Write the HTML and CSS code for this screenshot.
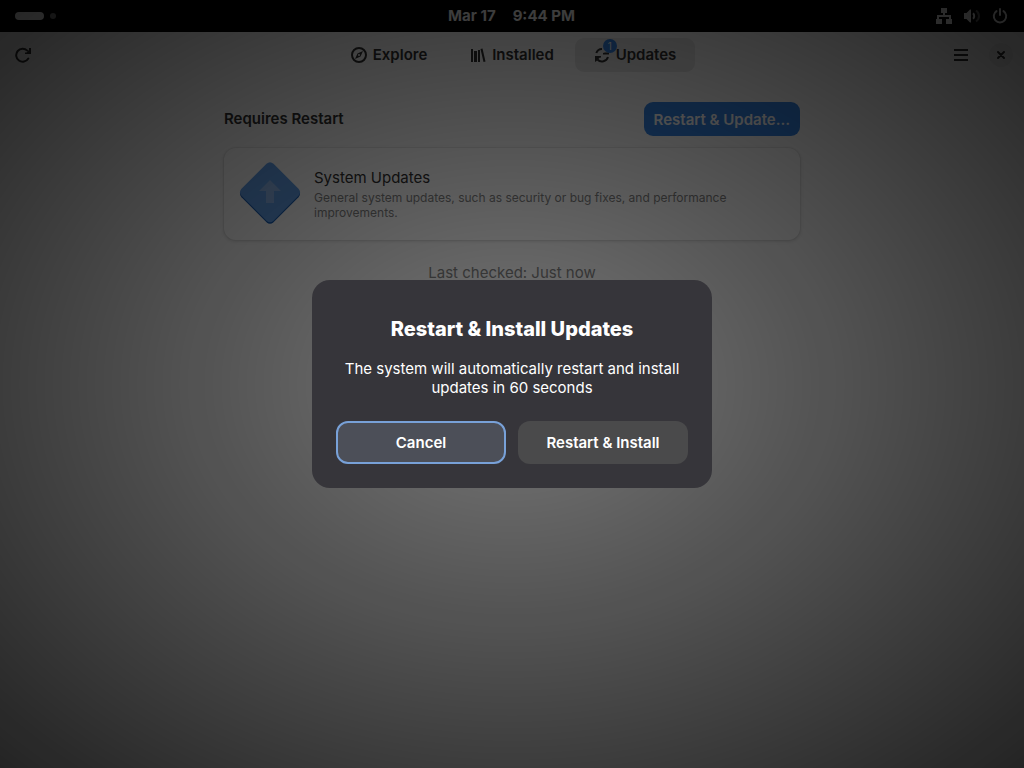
FILE: index.html
```html
<!DOCTYPE html>
<html lang="en">
<head>
<meta charset="utf-8">
<title>Software</title>
<meta name="viewport" content="width=device-width, initial-scale=1">
<link rel="stylesheet" href="styles.css">
</head>
<body>
<div class="desktop">
  <header class="panel">
    <button class="workspaces" aria-label="Activities"><span class="pill"></span><span class="dot"></span></button>
    <button class="clock"><span>Mar 17</span><span>9:44 PM</span></button>
    <button class="status" aria-label="System">
      <svg width="16" height="16" viewBox="0 0 16 16"><path fill="currentColor" d="M5 0h6v5H9v2h6v4h1v5h-6v-5h3V9H3v2h3v5H0v-5h1V7h6V5H5z"/></svg>
      <svg width="16" height="16" viewBox="0 0 16 16"><path fill="currentColor" d="M0 5h2.500L6 1.500h1v13H6L2.500 11H0z"/><path d="M9 5.200c1.600 1.400 1.600 4.200 0 5.600" fill="none" stroke="currentColor" stroke-width="2"/><path d="M12 2.500c4 3 4 8 0 11" fill="none" stroke="currentColor" stroke-width="2" opacity=".4"/></svg>
      <svg width="16" height="16" viewBox="0 0 16 16"><path d="M4.500 3.100a6.200 6.200 0 1 0 7 0M8 1v6" fill="none" stroke="currentColor" stroke-width="2" stroke-linecap="round"/></svg>
    </button>
  </header>
  <div class="window">
    <div class="headerbar">
      <div class="start">
        <button class="icon-button" aria-label="Check for updates"><svg width="16" height="16" viewBox="0 0 16 16"><path d="M13.300 11.500A6.500 6.500 0 1 1 12.300 3.600" fill="none" stroke="currentColor" stroke-width="2" stroke-linecap="round"/><path fill="currentColor" d="M14 1h2v6h-6V5.500h1.500L14 3z"/></svg></button>
      </div>
      <nav class="tabs">
        <button class="tab"><svg width="16" height="16" viewBox="0 0 16 16"><circle cx="8" cy="8" r="7" fill="none" stroke="currentColor" stroke-width="2"/><path fill="currentColor" fill-rule="evenodd" d="M12 4 9.500 9.500 4 12l2.500-5.500zM8 7a1 1 0 1 0 0 2 1 1 0 0 0 0-2z"/></svg><span>Explore</span></button>
        <button class="tab"><svg width="16" height="16" viewBox="0 0 16 16"><path fill="currentColor" d="M1 2h2v13H1zM4 4h3v11H4zM8 3h2v12H8zM10.500 2l2-.400L15.500 14.500l-2 .500z"/></svg><span>Installed</span></button>
        <button class="tab current" aria-current="page"><span class="tab-icon"><svg width="16" height="16" viewBox="0 0 16 16"><path d="M2.300 6A6 6 0 0 1 8 2M14 10A6.300 6.300 0 0 1 3.400 12.500" fill="none" stroke="currentColor" stroke-width="2"/><path fill="currentColor" d="M1 15V9h6v1.500l-1.500.300L2.500 14zM9 7.500V6l2-.500h4v2z"/></svg><span class="badge">1</span></span><span>Updates</span></button>
      </nav>
      <div class="end">
        <button class="icon-button" aria-label="Main menu"><svg width="16" height="16" viewBox="0 0 16 16"><path fill="currentColor" d="M1 2h14v2H1zM1 7h14v2H1zM1 12h14v2H1z"/></svg></button>
        <button class="close" aria-label="Close"><svg width="16" height="16" viewBox="0 0 16 16"><path d="M5 5l6 6M11 5l-6 6" stroke="currentColor" stroke-width="2" stroke-linecap="round"/></svg></button>
      </div>
    </div>
    <main class="content">
      <div class="section-head">
        <h2>Requires Restart</h2>
        <button class="suggested">Restart &amp; Update…</button>
      </div>
      <article class="card">
        <svg class="app-icon" width="64" height="64" viewBox="0 0 64 64"><path fill="#1a5fb4" d="M28.500 3.200q3.500-3 7 0l25 25q3 3.500 0 7l-25 25q-3.500 3-7 0l-25-25q-3-3.500 0-7z"/><path fill="#62a0ea" d="M28.500 1.700q3.500-3 7 0l25 25q3 3.500 0 7l-25 25q-3.500 3-7 0l-25-25q-3-3.500 0-7z"/><path fill="#8fb8ee" d="M32 18l11 11h-7v12h-8V29h-7z"/></svg>
        <div>
          <h3>System Updates</h3>
          <p>General system updates, such as security or bug fixes, and performance improvements.</p>
        </div>
      </article>
      <p class="checked">Last checked: Just now</p>
    </main>
  </div>
</div>
<div class="shade">
  <div class="dialog" role="alertdialog" aria-modal="true" aria-labelledby="dialog-title" aria-describedby="dialog-text">
    <h1 id="dialog-title">Restart &amp; Install Updates</h1>
    <p id="dialog-text">The system will automatically restart and install updates in 60 seconds</p>
    <div class="actions">
      <button class="action focused">Cancel</button>
      <button class="action">Restart &amp; Install</button>
    </div>
  </div>
</div>
</body>
</html>
```
FILE: styles.css
```css
* {
  box-sizing: border-box;
}

body {
  margin: 0;
  font: 15px/19px Inter, "Liberation Sans", sans-serif;
  color: #323232;
}

h1, h2, h3, p {
  margin: 0;
}

button {
  border: 0;
  padding: 0;
  background: none;
  color: inherit;
  font: inherit;
  font-weight: 700;
}

svg {
  display: block;
  flex: none;
}

.desktop {
  min-height: 100vh;
  display: flex;
  flex-direction: column;
}

.panel {
  display: grid;
  grid-template-columns: 1fr auto 1fr;
  align-items: center;
  height: 32px;
  padding: 0 16px 0 15px;
  background: #000;
  color: #f2f2f2;
}

.workspaces {
  display: flex;
  align-items: center;
  gap: 6px;
}

.pill {
  width: 29px;
  height: 8px;
  border-radius: 4px;
  background: #fff;
}

.dot {
  width: 6px;
  height: 6px;
  border-radius: 50%;
  background: #808080;
}

.clock {
  display: flex;
  gap: 17px;
  padding-bottom: 1px;
}

.status {
  display: flex;
  justify-self: end;
  gap: 12px;
}

.window {
  flex: 1;
  background: #fafafa;
}

.headerbar {
  display: grid;
  grid-template-columns: 1fr auto 1fr;
  align-items: center;
  height: 46px;
  padding: 0 6px;
}

.icon-button {
  display: grid;
  place-items: center;
  width: 34px;
  height: 34px;
}

.tabs {
  display: flex;
  gap: 3px;
}

.tab {
  display: flex;
  align-items: center;
  justify-content: center;
  gap: 6px;
  min-width: 120px;
  height: 34px;
  border-radius: 9px;
  line-height: 18px;
}

.current {
  background: #e6e6e6;
}

.tab-icon {
  position: relative;
}

.badge {
  position: absolute;
  top: -8px;
  right: -7px;
  width: 14px;
  height: 14px;
  border-radius: 50%;
  background: #3584e4;
  color: #fff;
  font-size: 10px;
  line-height: 14px;
  font-weight: 400;
}

.end {
  display: flex;
  align-items: center;
  justify-self: end;
  gap: 11px;
}

.close {
  display: grid;
  place-items: center;
  width: 24px;
  height: 24px;
  margin-right: 5px;
  border-radius: 50%;
  background: #ebebeb;
}

.content {
  max-width: 600px;
  margin: 0 auto;
  padding: 24px 12px;
}

.section-head {
  display: flex;
  align-items: center;
  justify-content: space-between;
  margin-bottom: 12px;
}

.section-head h2 {
  font-size: 15px;
  line-height: 18px;
  font-weight: 600;
}

.suggested {
  height: 34px;
  padding: 0 10px;
  border-radius: 9px;
  background: #3584e4;
  color: #fff;
  font-weight: 600;
}

.tab,
.action {
  font-weight: 600;
}

.card {
  display: flex;
  align-items: center;
  gap: 12px;
  min-height: 92px;
  padding: 12px 14px;
  border-radius: 12px;
  background: #fff;
  box-shadow: 0 0 0 1px rgba(0, 0, 0, .04), 0 1px 3px 1px rgba(0, 0, 0, .1);
}

.card h3 {
  font-size: 15px;
  line-height: 18px;
  font-weight: 400;
}

.card p {
  margin-top: 3px;
  font-size: 12px;
  line-height: 15px;
  color: #848484;
}

.checked {
  margin-top: 23px;
  text-align: center;
  color: #848484;
}

.shade {
  position: fixed;
  inset: 0;
  display: grid;
  place-items: center;
  background: radial-gradient(ellipse farthest-corner, rgba(0, 0, 0, .52), rgba(0, 0, 0, .86));
}

.dialog {
  width: 400px;
  max-width: 100%;
  padding: 36px 24px 24px;
  border-radius: 18px;
  background: #36353a;
  color: #fff;
  text-align: center;
}

.dialog h1 {
  font-size: 20px;
  line-height: 26px;
  font-weight: 800;
}

.dialog p {
  margin: 17px 0 24px;
}

.actions {
  display: grid;
  grid-template-columns: 1fr 1fr;
  gap: 12px;
}

.action {
  height: 43px;
  border-radius: 12px;
  background: #4a4a4b;
}

.focused {
  border: 2px solid #78a1d8;
  background: #4c4f58;
}
```
